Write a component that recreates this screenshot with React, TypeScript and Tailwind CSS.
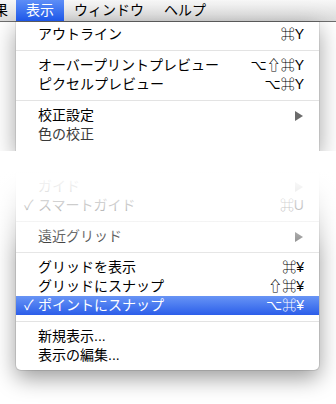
import React from 'react';

// ============================================================
// Illustrator-style "表示" menu (macOS)
// ============================================================

type Item =
  | { kind: 'sep' }
  | {
      kind: 'item';
      label: string;
      shortcut?: string;
      submenu?: boolean;
      checked?: boolean;
      active?: boolean;
      dim?: boolean;
    };

const topItems: Item[] = [
  { kind: 'item', label: 'アウトライン', shortcut: '⌘Y' },
  { kind: 'sep' },
  { kind: 'item', label: 'オーバープリントプレビュー', shortcut: '⌥⇧⌘Y' },
  { kind: 'item', label: 'ピクセルプレビュー', shortcut: '⌥⌘Y' },
  { kind: 'sep' },
  { kind: 'item', label: '校正設定', submenu: true },
  { kind: 'item', label: '色の校正', dim: true },
];

const bottomItems: Item[] = [
  { kind: 'item', label: 'ガイド', submenu: true },
  { kind: 'item', label: 'スマートガイド', shortcut: '⌘U', checked: true },
  { kind: 'sep' },
  { kind: 'item', label: '遠近グリッド', submenu: true },
  { kind: 'sep' },
  { kind: 'item', label: 'グリッドを表示', shortcut: '⌘¥' },
  { kind: 'item', label: 'グリッドにスナップ', shortcut: '⇧⌘¥' },
  { kind: 'item', label: 'ポイントにスナップ', shortcut: '⌥⌘¥', checked: true, active: true },
  { kind: 'sep' },
  { kind: 'item', label: '新規表示...' },
  { kind: 'item', label: '表示の編集...' },
];

const Arrow = ({ color }: { color: string }) => (
  <svg width="8" height="10" viewBox="0 0 8 10" className="mr-[1px]">
    <path d="M0 0 L8 5 L0 10 Z" fill={color} />
  </svg>
);

const MenuRows = ({ items }: { items: Item[] }) => (
  <>
    {items.map((it, idx) => {
      if (it.kind === 'sep') {
        return (
          <div key={idx} className="h-[12px] flex items-center">
            <div className="h-px w-full bg-[#e3e3e3]" />
          </div>
        );
      }
      return (
        <div
          key={idx}
          className={
            it.active
              ? 'h-[19px] flex items-center pl-[8px] pr-[15px] bg-gradient-to-b from-[#6894f5] to-[#2c5de9] text-white'
              : `h-[19px] flex items-center pl-[8px] pr-[15px] ${it.dim ? 'text-[#3a3a3a]' : 'text-black'}`
          }
        >
          <span className="w-[14px] text-[14px] leading-[19px]">{it.checked ? '✓' : ''}</span>
          <span className="text-[14px] leading-[19px] whitespace-nowrap">{it.label}</span>
          <span className="ml-auto text-[14px] leading-[19px] whitespace-nowrap">
            {it.submenu ? <Arrow color="#6b6b6b" /> : it.shortcut}
          </span>
        </div>
      );
    })}
  </>
);

const App = () => {
  return (
    <div
      className="relative w-[336px] h-[404px] overflow-hidden bg-white"
      style={{ fontFamily: '"Liberation Sans", "Noto Sans CJK JP", "DejaVu Sans", sans-serif' }}
    >
      {/* Menu bar */}
      <div className="h-[22px] flex items-stretch bg-gradient-to-b from-[#f7f7f7] to-[#dcdcdc] border-b border-[#6e6e6e] text-[14px] text-black">
        <div className="ml-[-30px] pl-[10px] pr-[8px] flex items-center">効果</div>
        <div className="px-[10px] flex items-center text-white bg-gradient-to-b from-[#5d8ef7] to-[#1d56e8]">表示</div>
        <div className="px-[10px] flex items-center">ウィンドウ</div>
        <div className="px-[10px] flex items-center">ヘルプ</div>
      </div>

      <div className="ml-[16px] w-[303px]">
        {/* Upper part of the menu */}
        <div className="bg-white pt-[3px] pb-[8px] shadow-[0_6px_22px_rgba(0,0,0,0.38),0_0_0_1px_rgba(0,0,0,0.08)]">
          <MenuRows items={topItems} />
        </div>

        {/* Lower part of the menu */}
        <div className="mt-[21px] bg-white pt-[4px] pb-[5px] rounded-b-[5px] shadow-[0_8px_22px_rgba(0,0,0,0.4),0_0_0_1px_rgba(0,0,0,0.1)]">
          <MenuRows items={bottomItems} />
        </div>
      </div>

      {/* White fade over the cut */}
      <div className="absolute left-0 right-0 top-[151px] h-[112px] bg-[linear-gradient(to_bottom,#fff_0px,#fff_20px,rgba(255,255,255,0.93)_35px,rgba(255,255,255,0.8)_54px,rgba(255,255,255,0.6)_70px,rgba(255,255,255,0.38)_85px,rgba(255,255,255,0.12)_100px,rgba(255,255,255,0)_112px)]" />
    </div>
  );
};

export default App;
